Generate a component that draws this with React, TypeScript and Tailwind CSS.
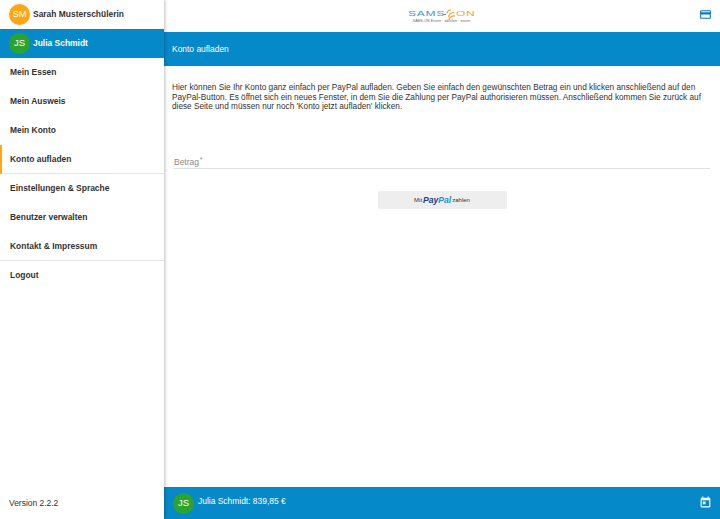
import React from 'react';

const menu = [
  { label: 'Mein Essen' },
  { label: 'Mein Ausweis' },
  { label: 'Mein Konto' },
  { label: 'Konto aufladen', active: true },
  { label: 'Einstellungen & Sprache' },
  { label: 'Benutzer verwalten' },
  { label: 'Kontakt & Impressum', divider: true },
  { label: 'Logout' },
];

const Avatar = ({ text, color }: { text: string; color: string }) => (
  <div className={`flex h-[21px] w-[21px] shrink-0 items-center justify-center rounded-full text-[9.5px] text-white ${color}`}>
    {text}
  </div>
);

const Logo = () => (
  <div className="flex w-[67px] flex-col items-center">
    <div className="flex h-[12px] w-full items-center text-[8px] leading-none tracking-[0.5px]">
      <span className="block w-[35px] origin-left scale-x-150 text-[#3f97c9]">SAMS</span>
      <span className="h-[1px] w-[3px] bg-[#3f97c9]" />
      <svg width="10" height="11" viewBox="0 0 10 11" fill="none" stroke="#f2a32c" strokeWidth="1.2">
        <path d="M1 4.5a4 4 0 0 1 4-3.5" />
        <path d="M2.5 8a6 6 0 0 1 6-4.5" />
        <path d="M3 11a5 5 0 0 1 6-4" />
      </svg>
      <span className="block w-[19px] origin-left scale-x-150 text-[#f2a32c]">ON</span>
    </div>
    <div className="text-[3.5px] leading-none tracking-[0.1px] text-[#666]">SAMS-ON Essen · abrufen · essen</div>
  </div>
);

export default function App() {
  return (
    <div className="flex h-[519px] w-[720px] overflow-hidden bg-white font-['Liberation_Sans',sans-serif] text-[#222]">
      <aside className="z-10 flex w-[164px] shrink-0 flex-col bg-white shadow-[1px_0_3px_rgba(0,0,0,0.25)]">
        <div className="flex h-[29px] items-center gap-[3px] pl-[9px]">
          <Avatar text="SM" color="bg-[#fea614]" />
          <span className="text-[8.45px] font-bold text-[#333]">Sarah Musterschülerin</span>
        </div>
        <div className="flex h-[29px] items-center gap-[3px] bg-[#0689c8] pl-[9px]">
          <Avatar text="JS" color="bg-[#2ca32f]" />
          <span className="text-[8.45px] font-bold text-white">Julia Schmidt</span>
        </div>
        <nav className="flex flex-col">
          {menu.map((item) => (
            <div
              key={item.label}
              className={`flex h-[29px] items-center pl-[10px] text-[8.45px] font-bold text-[#333] ${
                item.active ? 'shadow-[inset_2px_0_0_#fea614,inset_0_-1px_0_#e6e6e6]' : ''
              } ${item.divider ? 'shadow-[inset_0_-1px_0_#e6e6e6]' : ''}`}
            >
              {item.label}
            </div>
          ))}
        </nav>
        <div className="mt-auto flex h-[32px] items-center pl-[9px] text-[8.45px] text-[#333]">Version 2.2.2</div>
      </aside>

      <main className="flex min-w-0 flex-1 flex-col">
        <header className="relative flex h-[32px] shrink-0 items-center justify-center pr-[1px]">
          <Logo />
          <svg className="absolute right-[8px] top-[8px] text-[#0a78b8]" width="13" height="13" viewBox="0 0 24 24" fill="currentColor">
            <path d="M20 4H4c-1.11 0-2 .89-2 2v12c0 1.11.89 2 2 2h16c1.11 0 2-.89 2-2V6c0-1.11-.89-2-2-2zm0 14H4v-6h16v6zm0-10H4V6h16v2z" />
          </svg>
        </header>
        <div className="flex h-[34px] shrink-0 items-center bg-[#0689c8] pl-[8px] text-[8.45px] text-white">Konto aufladen</div>

        <div className="flex flex-1 flex-col px-[8px] pt-[17px]">
          <p className="text-[8.24px] leading-[9.5px] text-[#333]">
            Hier können Sie Ihr Konto ganz einfach per PayPal aufladen. Geben Sie einfach den gewünschten Betrag ein und klicken anschließend auf den PayPal-Button. Es öffnet sich ein neues Fenster, in dem Sie die Zahlung per PayPal authorisieren müssen. Anschließend kommen Sie zurück auf diese Seite und müssen nur noch 'Konto jetzt aufladen' klicken.
          </p>
          <div className="ml-[1px] mr-[2px] mt-[43px] flex h-[14px] items-center border-b border-[#e2e2e2] pl-[1px] pt-[2px] text-[8.45px] text-[#8a8a8a]">
            Betrag<span className="ml-[1px] -translate-y-[2px] text-[7px]">*</span>
          </div>
          <div className="mt-[22px] flex justify-center">
            <div className="flex h-[18px] w-[129px] items-center justify-center gap-[1px] rounded-[2px] bg-[#eeeeee] pt-[1px] text-[6px] text-[#333]">
              <span>Mit</span>
              <span className="text-[8.6px] font-bold italic leading-none">
                <span className="text-[#1f3f82]">Pay</span>
                <span className="text-[#2a90d0]">Pal</span>
              </span>
              <span>zahlen</span>
            </div>
          </div>
        </div>

        <footer className="flex h-[32px] shrink-0 items-center justify-between bg-[#0689c8] pl-[9px] pr-[8px] text-white">
          <div className="flex items-start gap-[4px]">
            <Avatar text="JS" color="bg-[#2ca32f]" />
            <span className="pt-[1px] text-[8.45px] leading-[15px]">Julia Schmidt: 839,85 €</span>
          </div>
          <svg width="13" height="13" viewBox="0 0 24 24" fill="currentColor" className="-translate-y-[1px] text-white">
            <path d="M19 3h-1V1h-2v2H8V1H6v2H5c-1.11 0-2 .9-2 2v14c0 1.1.89 2 2 2h14c1.1 0 2-.9 2-2V5c0-1.1-.9-2-2-2zm0 16H5V8h14v11zM7 10h5v5H7z" />
          </svg>
        </footer>
      </main>
    </div>
  );
}
